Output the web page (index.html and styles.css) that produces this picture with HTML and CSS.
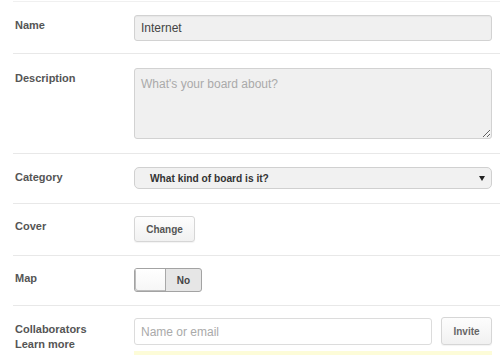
FILE: index.html
```html
<!DOCTYPE html>
<html>
<head>
<meta charset="utf-8">
<link rel="stylesheet" href="styles.css">
</head>
<body>
<form class="form">
  <div class="row row-name">
    <label class="label">Name</label>
    <div class="field"><input class="text-input filled" type="text" value="Internet"></div>
  </div>
  <div class="row row-desc">
    <label class="label">Description</label>
    <div class="field"><textarea class="textarea" placeholder="What's your board about?"></textarea></div>
  </div>
  <div class="row row-cat">
    <label class="label">Category</label>
    <div class="field">
      <div class="select"><span>What kind of board is it?</span><span class="arrow"></span></div>
    </div>
  </div>
  <div class="row row-cover">
    <label class="label">Cover</label>
    <div class="field"><button type="button" class="btn">Change</button></div>
  </div>
  <div class="row row-map">
    <label class="label">Map</label>
    <div class="field">
      <div class="toggle"><span class="knob"></span><span class="toggle-text">No</span></div>
    </div>
  </div>
  <div class="row row-collab">
    <div class="label label-collab">Collaborators<br><span>Learn more</span></div>
    <div class="field">
      <div class="invite-line">
        <input class="text-input plain" type="text" placeholder="Name or email">
        <button type="button" class="btn btn-invite">Invite</button>
      </div>
      <div class="notice"></div>
    </div>
  </div>
</form>
</body>
</html>
```
FILE: styles.css
```css
html, body {
  margin: 0;
  padding: 0;
  background: #fff;
  overflow: hidden;
}
body {
  font-family: "Liberation Sans", Arial, sans-serif;
  color: #4a4a4a;
}
.form {
  margin: 1px 0 0 13px;
  border-top: 1px solid #f0f0f0;
}
.row {
  display: flex;
  align-items: flex-start;
  padding: 12px 0 13px 2px;
  border-bottom: 1px solid #e8e8e8;
}
.row-name { padding-top: 13px; padding-bottom: 12px; }
.row-desc { padding-top: 14px; padding-bottom: 14px; }
.row-cat { padding-top: 13px; padding-bottom: 14px; }
.row-collab { border-bottom: none; padding-bottom: 0; }
.label {
  width: 119px;
  flex: none;
  font-size: 11px;
  font-weight: bold;
  line-height: 15px;
  padding-top: 3px;
  color: #555;
}
.label-collab { padding-top: 4px; }
.field {
  width: 358px;
  flex: none;
}
.text-input {
  box-sizing: border-box;
  display: block;
  width: 100%;
  height: 26px;
  margin: 0;
  padding: 0 6px;
  font-family: "Liberation Sans", Arial, sans-serif;
  font-size: 12px;
  color: #444;
  border: 1px solid #d2d2d2;
  border-radius: 3px;
  outline: none;
}
.text-input.filled {
  background: #f0f0f0;
  box-shadow: inset 0 1px 1px rgba(0,0,0,0.04);
}
.text-input.plain {
  background: #fff;
  height: 27px;
  border-color: #dcdcdc;
}
.text-input::placeholder,
.textarea::placeholder {
  color: #aaa;
  opacity: 1;
}
.textarea {
  box-sizing: border-box;
  display: block;
  width: 100%;
  height: 71px;
  margin: 0;
  padding: 7px 6px;
  font-family: "Liberation Sans", Arial, sans-serif;
  font-size: 12px;
  line-height: 16px;
  background: #f0f0f0;
  border: 1px solid #d2d2d2;
  border-radius: 3px;
  outline: none;
  resize: vertical;
}
.select {
  box-sizing: border-box;
  height: 22px;
  display: flex;
  align-items: center;
  justify-content: space-between;
  padding: 0 6px 0 15px;
  background: #f1f1f1;
  border: 1px solid #d0d0d0;
  border-radius: 5px;
  font-size: 10.2px;
  font-weight: bold;
  color: #333;
}
.arrow {
  width: 0;
  height: 0;
  border-left: 3px solid transparent;
  border-right: 3px solid transparent;
  border-top: 5px solid #222;
  margin-top: 1px;
}
.btn {
  box-sizing: border-box;
  height: 26px;
  margin: 0;
  padding: 0 10px;
  font-family: "Liberation Sans", Arial, sans-serif;
  font-size: 10px;
  font-weight: bold;
  color: #555;
  background: linear-gradient(#fdfdfd, #f1f1f1);
  border: 1px solid #d6d6d6;
  border-radius: 3px;
  box-shadow: 0 1px 1px rgba(0,0,0,0.05);
}
.row-cover .btn { width: 61px; }
.toggle {
  box-sizing: border-box;
  width: 68px;
  height: 24px;
  display: flex;
  background: #e6e6e6;
  border: 1px solid #a3a3a3;
  border-radius: 3px;
  overflow: hidden;
}
.knob {
  width: 30px;
  height: 100%;
  background: linear-gradient(#ffffff, #f6f6f6);
  border-right: 1px solid #a8a8a8;
  border-radius: 0 0 0 2px;
  box-shadow: inset 1px -1px 0 #bdbdbd;
}
.toggle-text {
  flex: 1;
  display: flex;
  align-items: center;
  justify-content: center;
  font-size: 10px;
  font-weight: bold;
  color: #444;
}
.invite-line {
  display: flex;
  align-items: flex-start;
  gap: 9px;
}
.invite-line .text-input { flex: 1; }
.btn-invite {
  width: 51px;
  height: 28px;
  margin-top: -1px;
  padding: 0;
  color: #666;
}
.notice {
  height: 12px;
  margin-top: 6px;
  background: #fdfcd8;
}
```
